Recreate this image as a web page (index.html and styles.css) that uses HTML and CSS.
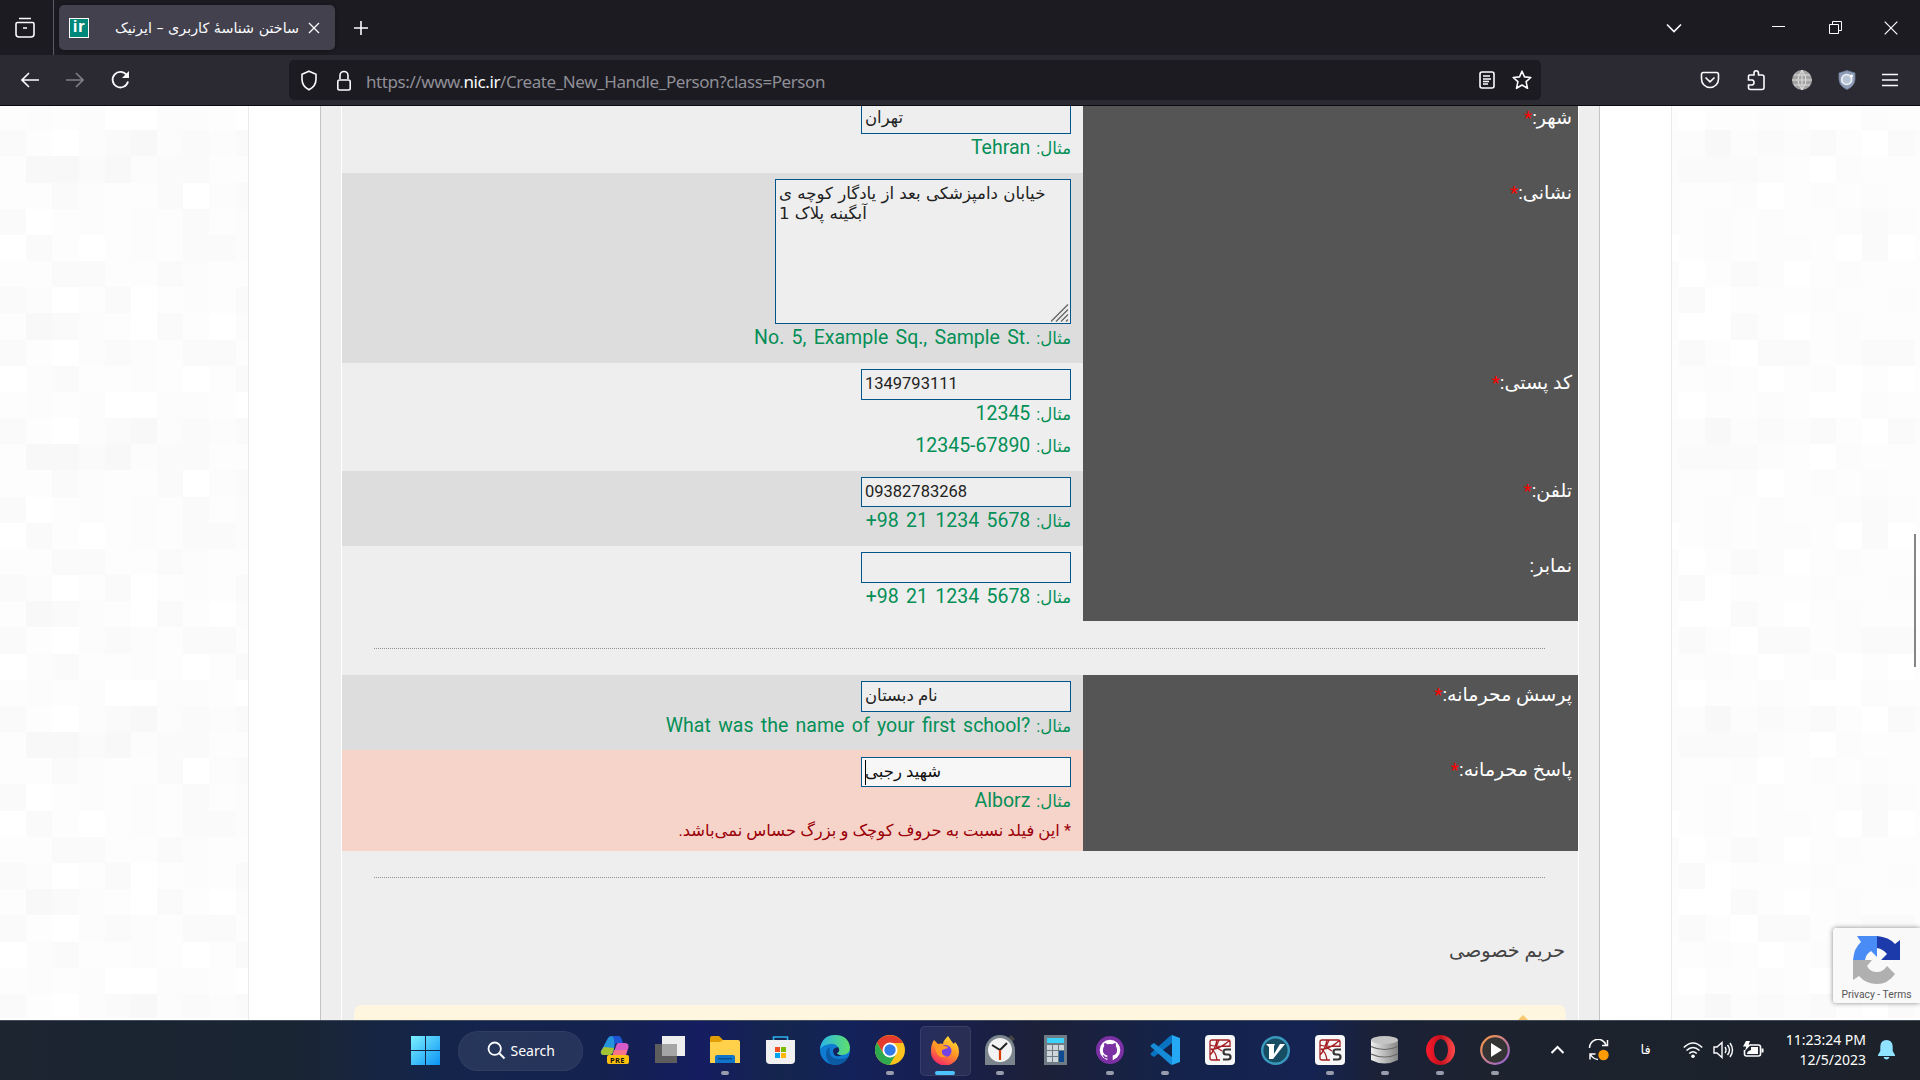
FILE: index.html
```html
<!DOCTYPE html>
<html lang="fa">
<head>
<meta charset="utf-8">
<title>ساختن شناسهٔ کاربری – ایرنیک</title>
<link rel="stylesheet" href="styles.css">
</head>
<body>
<header class="tabs">
  <svg class="view" width="22" height="22" viewBox="0 0 22 22"><path d="M5 1.500h12M3.500 5.500h15q1.500 0 1.500 1.500v10q0 3-3 3h-12q-3 0-3-3v-10q0-1.500 1.500-1.500zM9 11h4"/></svg>
  <div class="tab">
    <span class="fav">ir</span>
    <span class="tabtitle" dir="rtl">ساختن شناسهٔ کاربری – ایرنیک</span>
    <svg width="12" height="12" viewBox="0 0 12 12"><path d="M1 1l10 10M11 1L1 11" stroke-width="1.300"/></svg>
  </div>
  <svg class="plus" width="16" height="16" viewBox="0 0 16 16"><path d="M8 1v14M1 8h14"/></svg>
  <div class="winbtns">
    <svg width="18" height="12" viewBox="0 0 18 12"><path d="M2 2.500l7 7 7-7"/></svg>
    <svg width="13" height="13" viewBox="0 0 13 13"><path d="M0 5.500h13" stroke-width="1"/></svg>
    <svg width="13" height="13" viewBox="0 0 13 13"><path d="M.5 3.500h9v9h-9zM3.500 3.500v-3h9v9h-3" stroke-width="1"/></svg>
    <svg width="14" height="14" viewBox="0 0 14 14"><path d="M.7.7l12.600 12.600M13.300.7L.7 13.300" stroke-width="1.200"/></svg>
  </div>
</header>
<nav class="toolbar">
  <div class="navbtns">
    <svg width="18" height="18" viewBox="0 0 18 18"><path d="M18 9H1M8 2L1 9l7 7"/></svg>
    <svg class="dim" width="18" height="18" viewBox="0 0 18 18"><path d="M0 9h17M10 2l7 7-7 7"/></svg>
    <svg width="20" height="20" viewBox="0 0 20 20"><path d="M16 5.500A7.800 7.800 0 1 0 17 11.500" stroke-width="1.800"/><path d="M18 1v7h-7z" fill="#fbfbfe" stroke="none"/></svg>
  </div>
  <div class="urlbar">
    <svg width="20" height="21" viewBox="0 0 20 21"><path d="M10 1.200l7 3v5q0 7-7 10.600Q3 16.200 3 9.200v-5z"/></svg>
    <svg width="18" height="21" viewBox="0 0 18 21"><path d="M5 9V5.500a4 4 0 0 1 8 0V9M4.500 10h9q1.700 0 1.700 1.700v6.600q0 1.700-1.700 1.700h-9q-1.700 0-1.700-1.700v-6.600q0-1.700 1.700-1.700z"/></svg>
    <span class="url">https://www.<b>nic.ir</b>/Create_New_Handle_Person?class=Person</span>
    <svg width="16" height="18" viewBox="0 0 16 18"><rect x="1" y="1" width="14" height="16" rx="2"/><path d="M4 5h7M4 8h8M4 10.500h6M4 13h5" stroke-width="1.300"/></svg>
    <svg class="star" width="20" height="20" viewBox="0 0 20 20"><path stroke-linejoin="round" d="M10 1.200l2.500 5.700 6.300.6-4.700 4.200 1.400 6.600L10 15l-5.500 3.300 1.400-6.600L1.200 7.500l6.300-.6z"/></svg>
  </div>
  <div class="ext">
    <svg width="20" height="20" viewBox="0 0 20 20"><path d="M3.500 2.500h13q2 0 2 2V9a8.500 8.500 0 0 1-17 0V4.500q0-2 2-2zM5.500 7.500l4.500 4.300 4.500-4.300"/></svg>
    <svg width="20" height="22" viewBox="0 0 20 22"><path d="M2.500 10V7q0-1 1-1H8V4.200q0-2.500 2.200-2.500t2.300 2.500V6H16q2 0 2 2v10.500q0 2-2 2H4.500q-2 0-2-2V16H6q2-.3 2-2.500T6 11H2.500z"/></svg>
    <svg width="20" height="20" viewBox="0 0 20 20"><circle cx="10" cy="10" r="10" fill="#a3a3a3" stroke="none"/><path d="M10 0v20M0 10h20M2 5h16M2 15h16M10 0Q2 10 10 20M10 0q8 10 0 20" stroke="#e4e4e4" stroke-width=".9"/></svg>
    <svg width="18" height="20" viewBox="0 0 18 20"><path d="M9 .5L17 3v6q0 7-8 10.500Q1 16 1 9V3z" fill="#8f9db8" stroke="#6e7b96" stroke-width=".8"/><circle cx="8.700" cy="9.500" r="5" fill="#b9c3d6" stroke="#eef1f6" stroke-width="1.600"/><circle cx="13.500" cy="6" r="1.500" fill="#fff" stroke="none"/></svg>
    <svg width="16" height="16" viewBox="0 0 16 16"><path d="M0 2.500h16M0 8h16M0 13.500h16" stroke-width="1.300"/></svg>
  </div>
</nav>
<main class="page">
  <div class="mosaic left" id="mosaicLeft"></div>
  <div class="sheet">
    <div class="panel">
      <div class="inner">
        <section class="form">
          <div class="row r-city"><div class="label" dir="rtl">شهر:<i>*</i></div><div class="field"><div class="input fa cut">تهران</div><div class="hint" dir="rtl"><span>مثال:</span> <bdi>Tehran</bdi></div></div></div>
          <div class="row alt r-addr"><div class="label" dir="rtl">نشانی:<i>*</i></div><div class="field"><div class="input area"><div>خیابان دامپزشکی بعد از یادگار کوچه ی</div><div>آبگینه پلاک 1</div><svg width="18" height="18" viewBox="0 0 18 18"><path d="M0 17.500L17 .5M5 17.500l12-12M10 17.500l7-7M15 17.500l2-2"/></svg></div><div class="hint" dir="rtl"><span>مثال:</span> <bdi dir="ltr">No. 5, Example Sq., Sample St.</bdi></div></div></div>
          <div class="row r-post"><div class="label" dir="rtl">کد پستی:<i>*</i></div><div class="field"><div class="input">1349793111</div><div class="hint" dir="rtl"><span>مثال:</span> <bdi>12345</bdi></div><div class="hint next" dir="rtl"><span>مثال:</span> <bdi dir="ltr">12345-67890</bdi></div></div></div>
          <div class="row alt r-tel"><div class="label" dir="rtl">تلفن:<i>*</i></div><div class="field"><div class="input short">09382783268</div><div class="hint" dir="rtl"><span>مثال:</span> <bdi dir="ltr">+98 21 1234 5678</bdi></div></div></div>
          <div class="row r-fax"><div class="label" dir="rtl">نمابر:</div><div class="field"><div class="input"></div><div class="hint" dir="rtl"><span>مثال:</span> <bdi dir="ltr">+98 21 1234 5678</bdi></div></div></div>
        </section>
        <div class="rule"></div>
        <section class="form">
          <div class="row alt r-q"><div class="label" dir="rtl">پرسش محرمانه:<i>*</i></div><div class="field"><div class="input fa">نام دبستان</div><div class="hint" dir="rtl"><span>مثال:</span> <bdi dir="ltr">What was the name of your first school?</bdi></div></div></div>
          <div class="row focus r-a"><div class="label" dir="rtl">پاسخ محرمانه:<i>*</i></div><div class="field"><div class="input short fa active">شهید رجبی</div><div class="hint" dir="rtl"><span>مثال:</span> <bdi>Alborz</bdi></div><div class="note" dir="rtl">* این فیلد نسبت به حروف کوچک و بزرگ حساس نمی‌باشد.</div></div></div>
        </section>
        <div class="rule second"></div>
        <h2 dir="rtl">حریم خصوصی</h2>
        <div class="notice"><svg width="12" height="12" viewBox="0 0 12 12"><path d="M6 0l5 5v7H1V5z" fill="#f9c66b" stroke="none"/></svg></div>
      </div>
    </div>
  </div>
  <div class="mosaic right" id="mosaicRight"></div>
  <div class="scroll"></div>
  <aside class="captcha">
    <svg width="48" height="48" viewBox="0 0 48 48"><g stroke="none"><path d="M24 0q12 1 18 8l5-4v20H28l6-6q-4-5-10-6z" fill="#1c3aa9"/><path d="M24 0v21l-6-6q-5 3-6 9H0Q1 12 8 6L4 0z" fill="#4a8cf5"/><path d="M0 24h19l-5 6q3 6 10 6 6 0 10-6l8 8Q35 48 24 48 13 48 6 40l-6 4z" fill="#b0b0b0"/></g></svg>
    <span>Privacy - Terms</span>
  </aside>
</main>
<footer class="taskbar">
  <div class="apps">
    <div class="app"><svg width="29" height="29" viewBox="0 0 29 29"><defs><linearGradient id="wg" x1="0" y1="0" x2="1" y2="1"><stop offset="0" stop-color="#7cf0ff"/><stop offset="1" stop-color="#0a93f5"/></linearGradient></defs><path d="M0 0h14v14H0zM15 0h14v14H15zM0 15h14v14H0zM15 15h14v14H15z" fill="url(#wg)" stroke="none"/></svg></div>
    <div class="search"><svg width="19" height="19" viewBox="0 0 19 19"><circle cx="7.700" cy="7.700" r="6.200" stroke-width="1.800"/><path d="M12.300 12.300l5.200 5.200" stroke-width="2"/></svg><span>Search</span></div>
    <div class="app"><svg width="30" height="30" viewBox="0 0 30 30"><g stroke="none"><path d="M8 3q1-2 4-2h8q-3 1-4 5l-3 11q-1 3-4 3H4q-4 0-3-4z" fill="#2495dc"/><path d="M4 12l10 1-1 4q-1 3-4 3H4q-4 0-3-4z" fill="#a5c434"/><path d="M12 1h6q3 0 4 4l1 3h-5q-3 0-4 4 1-9-2-11z" fill="#1d55d6"/><path d="M18 8h7q5 0 3 6l-2 6H13l3-9q1-3 2-3z" fill="#d45bc8"/><path d="M14 15h13l-2 7H12z" fill="#f7738b"/><rect x="7" y="20" width="22" height="9" rx="2" fill="#fdc00d"/></g><text x="10" y="27.500" class="pre">PRE</text></svg></div>
    <div class="app"><svg width="30" height="28" viewBox="0 0 30 28"><g stroke="none"><path d="M7 0h23v20H7z" fill="#eee"/><path d="M0 8h22v19H0z" fill="#5d5d5d"/><path d="M7 8h15v12H7z" fill="#a5a5a5"/></g></svg></div>
    <div class="app run"><svg width="30" height="28" viewBox="0 0 30 28"><g stroke="none"><path d="M0 2q0-2 2-2h7l4 4h15v8H0z" fill="#e09d05"/><path d="M0 6h10l3-2h15q2 0 2 2v21H0z" fill="#ffd04a"/><path d="M5 27v-6q0-2 2-2h16q2 0 2 2v6z" fill="#1074c8"/><path d="M8 22h14v1.500H8z" fill="#0a4f93"/></g></svg></div>
    <div class="app"><svg width="29" height="30" viewBox="0 0 29 30"><path d="M7.500 6V2h14v4" stroke="#2cb1ec"/><g stroke="none"><path d="M0 5h29v20q0 4-4 4H4q-4 0-4-4z" fill="#f1f1f1"/><path d="M9 12h5v5H9z" fill="#f25022"/><path d="M15 12h5v5h-5z" fill="#7fba00"/><path d="M9 18h5v5H9z" fill="#00a4ef"/><path d="M15 18h5v5h-5z" fill="#ffb900"/></g></svg></div>
    <div class="app"><svg width="30" height="30" viewBox="0 0 30 30"><defs><linearGradient id="eg"><stop offset="0" stop-color="#29b5ea"/><stop offset="1" stop-color="#5fe06a"/></linearGradient></defs><g stroke="none"><circle cx="15" cy="15" r="15" fill="#0f7cd3"/><path d="M0 14Q2 0 15 0t15 12q0 8-8 8-5 0-5-2 3-2 1-6-3-4-8-3-7 1-10 5z" fill="url(#eg)"/><path d="M10 12q-3 12 10 12 5 0 8-2-4 8-13 8Q6 29 6 19q0-5 4-7z" fill="#0c59a4"/><path d="M18 12q3 4-1 6 0 2 5 2-8 4-9-4 0-3 5-4z" fill="#13225a"/></g></svg></div>
    <div class="app run"><svg width="30" height="30" viewBox="0 0 30 30"><g stroke="none"><circle cx="15" cy="15" r="15" fill="#fcc31e"/><path d="M15 8h13A15 15 0 0 0 2 7.500l6.500 11z" fill="#e33b2e"/><path d="M2 7.500A15 15 0 0 0 14.500 30L21 19l-12.500 0z" fill="#2da94f"/><circle cx="15" cy="15" r="7.500" fill="#fff"/><circle cx="15" cy="15" r="5.700" fill="#2f7be8"/></g></svg></div>
    <div class="app run current"><svg width="28" height="29" viewBox="0 0 28 29"><defs><linearGradient id="fg" x1=".8" y1="0" x2=".3" y2="1"><stop offset="0" stop-color="#ffe436"/><stop offset=".5" stop-color="#ff9425"/><stop offset="1" stop-color="#f5246b"/></linearGradient></defs><g stroke="none"><path d="M3 4l4 4q3-1 5 0 0-3 5-8 2 3 4 6l2 2 1-2q4 4 4 10A14 14 0 0 1 0 15q0-7 3-11z" fill="url(#fg)"/><circle cx="14.500" cy="15" r="6" fill="#7542e5"/><path d="M4 9q6-1 9 1 4 0 4 2l-6 2q-1 6 5 6-5 3-9-1-3-4-3-10z" fill="#ff9a26"/></g></svg></div>
    <div class="app run"><svg width="30" height="30" viewBox="0 0 30 30"><g stroke="none"><path d="M23 3l3-3 4 4-3 3z" fill="#444"/><path d="M0 15a15 15 0 0 1 30 0v15H0z" fill="#7a848d"/><circle cx="15" cy="15" r="12" fill="#f3f3f3"/></g><path d="M7 10l8 5 7-7" stroke="#222" stroke-width="2"/><path d="M15 15v10" stroke="#d83b01" stroke-width="2.200"/></svg></div>
    <div class="app"><svg width="23" height="30" viewBox="0 0 23 30"><g stroke="none"><path d="M0 0h23v30H0z" fill="#6f7b85"/><path d="M3 3h17v5H3z" fill="#3dd2fa"/><path d="M3 10h5v5H3zM9 10h5v5H9zM15 10h5v5h-5zM3 16h5v5H3zM9 16h5v5H9zM3 22h5v5H3zM9 22h5v5H9z" fill="#ced5db"/><path d="M15 16h5v11h-5z" fill="#0c4a91"/></g></svg></div>
    <div class="app run"><svg width="28" height="28" viewBox="0 0 28 28"><g stroke="none"><circle cx="14" cy="14" r="14" fill="#7b30a3"/><circle cx="14" cy="14" r="10.300" fill="#fff"/><path d="M11.300 25v-5.500Q6.500 18.500 7 13.500q0-2 1.200-3.200-.4-1.500.2-3.300 1.300 0 3 1.300 2.600-.7 5.200 0 1.700-1.300 3-1.300.6 1.800.2 3.300Q21 11.500 21 13.500q.5 5-4.300 6V25z" fill="#7b30a3"/><path d="M11.500 21.500q-3 .8-4.200-2.200" stroke="#7b30a3" stroke-width="1.400"/></g></svg></div>
    <div class="app run"><svg width="30" height="30" viewBox="0 0 30 30"><g stroke="none"><path d="M22 0l8 3v24l-8 3z" fill="#26a9f4"/><path d="M22 8L4 22l-3-2q-1-1 0-2L20 1l2-1z" fill="#0873c0"/><path d="M22 22L4 8l-3 2q-1 1 0 2l19 17 2 1z" fill="#168bd8"/></g></svg></div>
    <div class="app"><svg width="30" height="30" viewBox="0 0 30 30"><use href="#spy"/></svg></div>
    <div class="app"><svg width="29" height="29" viewBox="0 0 29 29"><circle cx="14.500" cy="14.500" r="13.300" fill="#164d63" stroke="#3899bd" stroke-width="2.400"/><path d="M5 8h9l-1 2 0 8 6-10h5L12 23H8L8 11z" fill="#fff" stroke="none"/></svg></div>
    <div class="app run"><svg width="30" height="30" viewBox="0 0 30 30"><g id="spy"><rect width="30" height="30" rx="4" fill="#f7f7f7" stroke="none"/><path d="M15 25H7q-2 0-2-2V7q0-2 2-2h16q2 0 2 2v5M12 5q-2 10-7 15M5 10q4 2 20 1M12 25q-1-8-6-11 8 1 19-9M14 5l-3 7 6 4" stroke="#a51d22" stroke-width="1.300"/><path d="M26 14.500h-5q-2.500 0-2.500 2.500t2.500 2.500h2q2.500 0 2.500 2.500T23 24.500h-5" stroke="#333" stroke-width="2.200"/></g></svg></div>
    <div class="app run"><svg width="28" height="30" viewBox="0 0 28 30"><defs><linearGradient id="dg"><stop offset="0" stop-color="#eee"/><stop offset="1" stop-color="#858585"/></linearGradient></defs><g stroke="none" fill="url(#dg)"><path d="M0 5v20q13.500 7 27 0V5z"/><ellipse cx="13.500" cy="5" rx="13.500" ry="4" fill="#c4c4c4"/></g><path d="M0 11.500q13.500 6 27 0M0 19q13.500 6 27 0" stroke="#6a6a6a" stroke-width="1.200"/></svg></div>
    <div class="app run"><svg width="29" height="30" viewBox="0 0 29 30"><defs><linearGradient id="og"><stop offset="0" stop-color="#ff1b2d"/><stop offset=".5" stop-color="#c3101e"/><stop offset="1" stop-color="#ff4b4b"/></linearGradient></defs><path fill-rule="evenodd" d="M14.500 0a14.500 15 0 1 0 .1 0zM15 4a7 11 0 1 1-.1 0z" fill="url(#og)" stroke="none"/></svg></div>
    <div class="app run"><svg width="30" height="30" viewBox="0 0 30 30"><defs><linearGradient id="pg" x1="0" y1="0" x2="1" y2="1"><stop offset="0" stop-color="#ff9a3d"/><stop offset="1" stop-color="#8e5fe0"/></linearGradient></defs><circle cx="15" cy="15" r="13.800" fill="#343434" stroke="url(#pg)" stroke-width="2.200"/><path d="M11 8l11 7-11 7z" fill="#fff" stroke="none"/></svg></div>
  </div>
  <div class="tray">
    <svg class="t-chev" width="15" height="10" viewBox="0 0 15 10"><path d="M1.500 8l6-6 6 6" stroke-width="2"/></svg>
    <svg class="t-sync" width="22" height="22" viewBox="0 0 22 22"><path d="M1.500 9A8.500 8.500 0 0 1 18 6M19.500 1v5.500H14M2 20.500V15h5.500M2.500 15.500Q5 20 10 20.500" stroke-width="1.500"/><circle cx="15.500" cy="16" r="5.200" fill="#ff9b05" stroke="none"/></svg>
    <span class="t-lang">فا</span>
    <svg class="t-wifi" width="20" height="18" viewBox="0 0 20 18"><path d="M.8 6.500Q10-2.500 19.200 6.500M3.500 9.500q6.500-6 13 0M6.200 12.500q3.800-3.500 7.600 0" stroke-width="1.600"/><circle cx="10" cy="15.200" r="1.800" fill="#fff" stroke="none"/></svg>
    <svg class="t-vol" width="21" height="18" viewBox="0 0 21 18"><path d="M1 6h3l5-4.500v15L4 12H1zM12 6q2 3 0 6M14.500 4q4 5 0 10M17 2q5 7 0 14" stroke-width="1.400"/></svg>
    <svg class="t-bat" width="21" height="18" viewBox="0 0 21 18"><path d="M7 4h8.500q2 0 2 2v7q0 2-2 2h-12q-2 0-2-2v-4" stroke-width="1.600"/><path d="M8 6h7v7H4q0-3 4-4zM18.500 7.500h2v4h-2zM3 0h4L5.500 3.500H8L2 10l1.200-4.500H0z" fill="#fff" stroke="none"/></svg>
    <div class="clock"><span>11:23:24 PM</span><span>12/5/2023</span></div>
    <svg class="t-bell" width="17" height="20" viewBox="0 0 17 20"><path d="M8.500 0q6 .3 6.200 6.500V11l2.300 4v1H0v-1l2.300-4V6.500Q2.500.3 8.500 0zM5.500 17h6q-1 2.500-3 2.500t-3-2.500z" fill="#8fe3ff" stroke="none"/></svg>
  </div>
</footer>
<script src="mosaic.js"></script>
</body>
</html>
```
FILE: styles.css
```css
* { box-sizing: border-box; }
body { margin: 0; width: 1920px; height: 1080px; overflow: hidden; font-family: Roboto, "DejaVu Sans", sans-serif; background: #fff; }
svg { display: block; flex: none; fill: none; stroke: #fbfbfe; stroke-width: 1.6; }

.tabs { display: flex; align-items: center; height: 55px; background: #1c1b22; }
.view { margin: 0 17px 0 14px; }
.tab { position: relative; display: flex; align-items: center; width: 276px; height: 45px; margin-left: 6px; padding: 0 15px 0 10px; border-radius: 5px; background: #42414d; box-shadow: 0 0 4px #0005; }
.tab::before { content: ""; position: absolute; left: -6px; top: -5px; width: 1px; height: 55px; background: #5b5a64; }
.fav { width: 20px; height: 20px; border: 1px solid #fff; background: #00897b; color: #fff; font: bold 17px/15px "Liberation Sans", sans-serif; text-align: center; letter-spacing: .5px; }
.tabtitle { flex: 1; margin-right: 9px; color: #fbfbfe; font: 14.300px/24px "DejaVu Sans", sans-serif; white-space: nowrap; }
.plus { margin-left: 18px; }
.winbtns { display: flex; align-items: center; width: 233px; margin-left: auto; margin-right: 22px; }
.winbtns svg:nth-child(2) { margin-left: 89px; }
.winbtns svg:nth-child(3) { margin-left: 44px; }
.winbtns svg:nth-child(4) { margin-left: auto; }

.toolbar { display: flex; align-items: center; height: 51px; background: #2b2a33; border-bottom: 1px solid #0c0c0d; }
.navbtns { display: flex; align-items: center; gap: 27px; width: 289px; padding-left: 21px; }
.dim { opacity: .4; }
.urlbar { display: flex; align-items: center; width: 1252px; height: 40px; padding: 0 9px 0 10px; border-radius: 5px; background: #1c1b22; }
.urlbar svg:nth-child(2) { margin-left: 16px; }
.url { flex: 1; margin-left: 13px; padding-top: 3px; color: #8f8f96; font: 17px/24px "Noto Sans", sans-serif; letter-spacing: -.42px; }
.url b { color: #fbfbfe; font-weight: 400; }
.star { margin-left: 17px; }
.ext { display: flex; align-items: center; width: 199px; gap: 26px; margin-left: auto; margin-right: 21px; }
.ext svg:last-child { margin-left: auto; margin-right: 1px; }

.page { position: relative; display: flex; height: 914px; overflow: hidden; }
.mosaic { display: grid; grid-auto-rows: 26.18px; width: 248px; height: 914px; overflow: hidden; align-content: start; }
#mosaicLeft, #mosaicRight { margin-top: -2px; }
.left { grid-template-columns: repeat(10, 26.18px); }
.right { grid-template-columns: 7px repeat(9, 26.18px) 6px; }
.sheet { width: 1424px; border: solid #ebebeb; border-width: 0 1px; padding: 0 71px; background: #fff; }
.panel { width: 1280px; height: 914px; padding: 0 20px; border: solid #c4c4c4; border-width: 0 1px; background: #eee; }
.inner { width: 1238px; height: 914px; border: solid #fff; border-width: 0 1px; overflow: hidden; }
.row { display: flex; flex-direction: row-reverse; }
.label { width: 495px; padding: 4px 6px 0 0; background: #555; color: #fff; font-size: 19px; line-height: 32px; }
.label i { color: #f00; font-style: normal; }
.field { display: flex; flex-direction: column; align-items: flex-end; flex: 1; padding: 6px 12px 0 0; background: #eee; }
.alt .field { background: #ddd; }
.focus .field { background: #f6d4ca; }
.r-city { height: 67px; }
.r-addr { height: 190px; }
.r-post { height: 108px; }
.r-tel, .r-fax, .r-q { height: 75px; }
.r-a { height: 101px; }
.r-city .field { padding-top: 0; }
.r-city .label { padding-top: 0; line-height: 23px; }
.r-a .field { padding-top: 7px; }
.input { flex: none; width: 210px; height: 31px; padding: 0 3px; border: 1px solid #00558c; background: #eee; color: #222; font-size: 16.500px; line-height: 28px; white-space: nowrap; }
.input.short { height: 30px; line-height: 27px; }
.input.cut { height: 28px; border-top: 0; line-height: 24px; }
.input.fa { font-size: 16.500px; }
.input.active { position: relative; background: #f7f7f7; color: #111; }
.active::before { content: ""; position: absolute; left: 3px; top: 2px; width: 1px; height: 25px; background: #000; }
.input.area { position: relative; width: 296px; height: 145px; padding-top: 4px; font-family: "DejaVu Sans", sans-serif; font-size: 16.600px; line-height: 20px; }
.area svg { position: absolute; right: 1px; bottom: 1px; stroke: #666; stroke-width: 1.3; }
.hint { height: 32px; margin-top: -2px; line-height: 32px; color: #048f57; font-size: 19.500px; white-space: nowrap; word-spacing: 2.500px; }
.hint span { margin-left: -1.500px; font-size: 16.500px; }
.hint.next { margin-top: 0; }
.note { height: 28px; line-height: 28px; color: #9c0008; font-size: 16.400px; white-space: nowrap; }
.rule { height: 1px; margin: 27px 33px 26px 32px; border-top: 1px dotted #909090; }
.rule.second { margin-top: 26px; margin-bottom: 0; }
h2 { margin: 55px 13px 0 0; color: #444; font-size: 19.200px; font-weight: 400; line-height: 36px; }
.notice { display: flex; justify-content: flex-end; width: 1212px; height: 60px; margin: 36px 0 0 12px; padding: 10px 37px; border-radius: 8px; background: #fff6e0; }
.scroll { position: absolute; left: 1914px; top: 428px; width: 2px; height: 133px; background: #858585; }
.captcha { position: absolute; left: 1833px; top: 822px; display: flex; flex-direction: column; align-items: center; gap: 4px; width: 87px; height: 75px; padding-top: 8px; border-radius: 3px 0 0 3px; background: #f9f9f9; box-shadow: 0 0 5px #888; }
.captcha span { color: #555; font: 10.300px/14px Roboto, sans-serif; }

.taskbar { display: flex; align-items: center; height: 60px; border-top: 1px solid #414d5b; background: linear-gradient(90deg, #1c2530 0, #1a2534 300px, #14254b 430px, #14224f 600px, #151d60 700px, #14254d 780px, #13225a 850px, #171f52 920px, #1c2038 1040px, #14234b 1180px, #142352 1310px, #1b2137 1375px, #1c232e 1500px, #1c212a 1920px); }
.apps { display: flex; align-items: center; margin-left: 397.500px; height: 59px; }
.app { position: relative; display: flex; align-items: center; justify-content: center; width: 55px; height: 50px; }
.app svg { z-index: 1; margin-top: -1px; }
.run::after { content: ""; position: absolute; left: 23.500px; bottom: 1px; width: 8px; height: 4px; border-radius: 2px; background: #999cac; }
.current::before { content: ""; position: absolute; inset: 0 2px; border: 1px solid #ffffff14; border-radius: 5px; background: #ffffff12; }
.current::after { left: 17.500px; width: 20px; background: #4cc2ff; }
.search { display: flex; align-items: center; gap: 5px; width: 125px; height: 40px; margin: 0 5px; padding-left: 28px; border-radius: 20px; background: #ffffff14; border: 1px solid #ffffff0c; color: #fff; font: 14px/20px "Noto Sans", sans-serif; }
.pre { fill: #111; stroke: none; font: bold 7.500px "Noto Sans", sans-serif; letter-spacing: .3px; }
.tray { display: flex; align-items: center; flex: 1; color: #fff; padding-bottom: 1px; }
.t-chev { margin-left: 27px; }
.t-sync { margin-left: 23px; }
.t-lang { margin-left: 31px; font: 13px/20px "DejaVu Sans", sans-serif; }
.t-wifi { margin-left: auto; margin-right: 10px; }
.t-vol { margin-right: 9px; }
.t-bat { margin-right: 9px; }
.clock { display: flex; flex-direction: column; align-items: flex-end; width: 93px; font: 14px/20px "Noto Sans", sans-serif; white-space: nowrap; }
.t-bell { margin: 0 25px 0 12px; }
```
FILE: mosaic.js
```js
// Shade index of each tile; the rows repeat down the page.
const shades = ["#ffffff", "#fdfdfd", "#fcfcfc", "#fafafa", "#f8f8f8"];
const leftRows = ["1212002210", "3102342323", "1443423311", "1132113023", "3012121312", "0310121332", "1133113211", "3201301213", "1432103102", "3102321331", "0231121013"];
const rightRows = ["10112100211", "22423231032", "23332102111", "21120121211", "21212112321", "01212210301", "20132012111", "13011121121", "10031012111", "13103312331", "11210120101"];
function fill(id, rows) {
  const box = document.getElementById(id);
  let html = "";
  for (let r = 0; r < 35; r++) {
    for (const c of rows[r % 11]) html += `<i style="background:${shades[c]}"></i>`;
  }
  box.innerHTML = html;
}
fill("mosaicLeft", leftRows);
fill("mosaicRight", rightRows);
```
